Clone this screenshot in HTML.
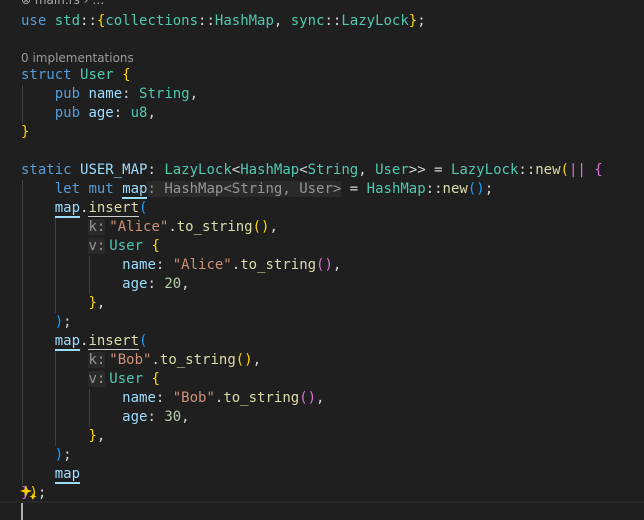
<!DOCTYPE html>
<html><head><meta charset="utf-8"><style>
html,body{margin:0;padding:0;background:#1f1f1f;width:644px;height:520px;overflow:hidden}
.l{position:absolute;left:21px;white-space:pre;font-family:"DejaVu Sans Mono","Liberation Mono",monospace;font-size:14px;line-height:19px;height:19px;color:#d4d4d4}
.k{color:#569cd6}.t{color:#4ec9b0}.v{color:#9cdcfe}.s{color:#ce9178}.f{color:#dcdcaa}.n{color:#b5cea8}
.y{color:#ffd700}.p{color:#da70d6}.b{color:#179fff}
.h{color:#969696;background:#2a2a2a;border-radius:2px}
.hk{margin-right:4px}
.u{border-bottom:2px solid #9cdcfe}
.w{border-bottom:1px solid #cccccc}
.g{position:absolute;width:1px;background:#404040}
.cl{position:absolute;left:21px;top:50px;font-family:"DejaVu Sans","Liberation Sans",sans-serif;font-size:12px;color:#999;line-height:16px}
</style></head><body>
<div class="cl" style="top:-8px;color:#aaa">⊗ main.rs › …</div>
<div class="l" style="top:12px"><span class="k">use</span> <span class="t">std</span>::<span class="y">{</span><span class="t">collections</span>::<span class="t">HashMap</span>, <span class="t">sync</span>::<span class="t">LazyLock</span><span class="y">}</span>;</div>
<div class="cl">0 implementations</div>
<div class="l" style="top:66px"><span class="k">struct</span> <span class="t">User</span> <span class="y">{</span></div>
<div class="l" style="top:85px">    <span class="k">pub</span> <span class="v">name</span>: <span class="t">String</span>,</div>
<div class="l" style="top:104px">    <span class="k">pub</span> <span class="v">age</span>: <span class="t">u8</span>,</div>
<div class="l" style="top:123px"><span class="y">}</span></div>
<div class="l" style="top:161px"><span class="k">static</span> <span class="v">USER_MAP</span>: <span class="t">LazyLock</span>&lt;<span class="t">HashMap</span>&lt;<span class="t">String</span>, <span class="t">User</span>&gt;&gt; = <span class="t">LazyLock</span>::<span class="f">new</span><span class="y">(</span><span class="p">||</span> <span class="p">{</span></div>
<div class="l" style="top:180px">    <span class="k">let</span> <span class="k">mut</span> <span class="v u">map</span><span class="h">: HashMap&lt;String, User&gt;</span> = <span class="t">HashMap</span>::<span class="f">new</span><span class="b">()</span>;</div>
<div class="l" style="top:199px">    <span class="v u">map</span>.<span class="f w">insert</span><span class="b">(</span></div>
<div class="l" style="top:218px">        <span class="h hk">k:</span><span class="s">"Alice"</span>.<span class="f">to_string</span><span class="y">()</span>,</div>
<div class="l" style="top:237px">        <span class="h hk">v:</span><span class="t">User</span> <span class="y">{</span></div>
<div class="l" style="top:256px">            <span class="v">name</span>: <span class="s">"Alice"</span>.<span class="f">to_string</span><span class="p">()</span>,</div>
<div class="l" style="top:275px">            <span class="v">age</span>: <span class="n">20</span>,</div>
<div class="l" style="top:294px">        <span class="y">}</span>,</div>
<div class="l" style="top:313px">    <span class="b">)</span>;</div>
<div class="l" style="top:332px">    <span class="v u">map</span>.<span class="f w">insert</span><span class="b">(</span></div>
<div class="l" style="top:351px">        <span class="h hk">k:</span><span class="s">"Bob"</span>.<span class="f">to_string</span><span class="y">()</span>,</div>
<div class="l" style="top:370px">        <span class="h hk">v:</span><span class="t">User</span> <span class="y">{</span></div>
<div class="l" style="top:389px">            <span class="v">name</span>: <span class="s">"Bob"</span>.<span class="f">to_string</span><span class="p">()</span>,</div>
<div class="l" style="top:408px">            <span class="v">age</span>: <span class="n">30</span>,</div>
<div class="l" style="top:427px">        <span class="y">}</span>,</div>
<div class="l" style="top:446px">    <span class="b">)</span>;</div>
<div class="l" style="top:465px">    <span class="v u">map</span></div>
<div class="l" style="top:484px"><span class="p">}</span><span class="y">)</span>;</div>
<svg style="position:absolute;left:20px;top:484px" width="18" height="18" viewBox="0 0 18 18"><path d="M6 1 L7.5 5.5 L12 7 L7.5 8.5 L6 13 L4.5 8.5 L0 7 L4.5 5.5 Z" fill="#ffcc00"/><path d="M13 9 L14 11.5 L16.5 12.5 L14 13.5 L13 16 L12 13.5 L9.5 12.5 L12 11.5 Z" fill="#ffcc00"/></svg>
<div style="position:absolute;left:0;top:501px;width:644px;height:19px;border-top:2px solid #282828;box-sizing:border-box"></div>
<div style="position:absolute;left:21px;top:503px;width:2px;height:17px;background:#aeafad"></div>
<div class="g" style="left:22px;top:85px;height:38px"></div>
<div class="g" style="left:22px;top:180px;height:304px"></div>
<div class="g" style="left:55px;top:218px;height:95px"></div>
<div class="g" style="left:55px;top:351px;height:95px"></div>
<div class="g" style="left:89px;top:256px;height:38px"></div>
<div class="g" style="left:89px;top:389px;height:38px"></div>
</body></html>
